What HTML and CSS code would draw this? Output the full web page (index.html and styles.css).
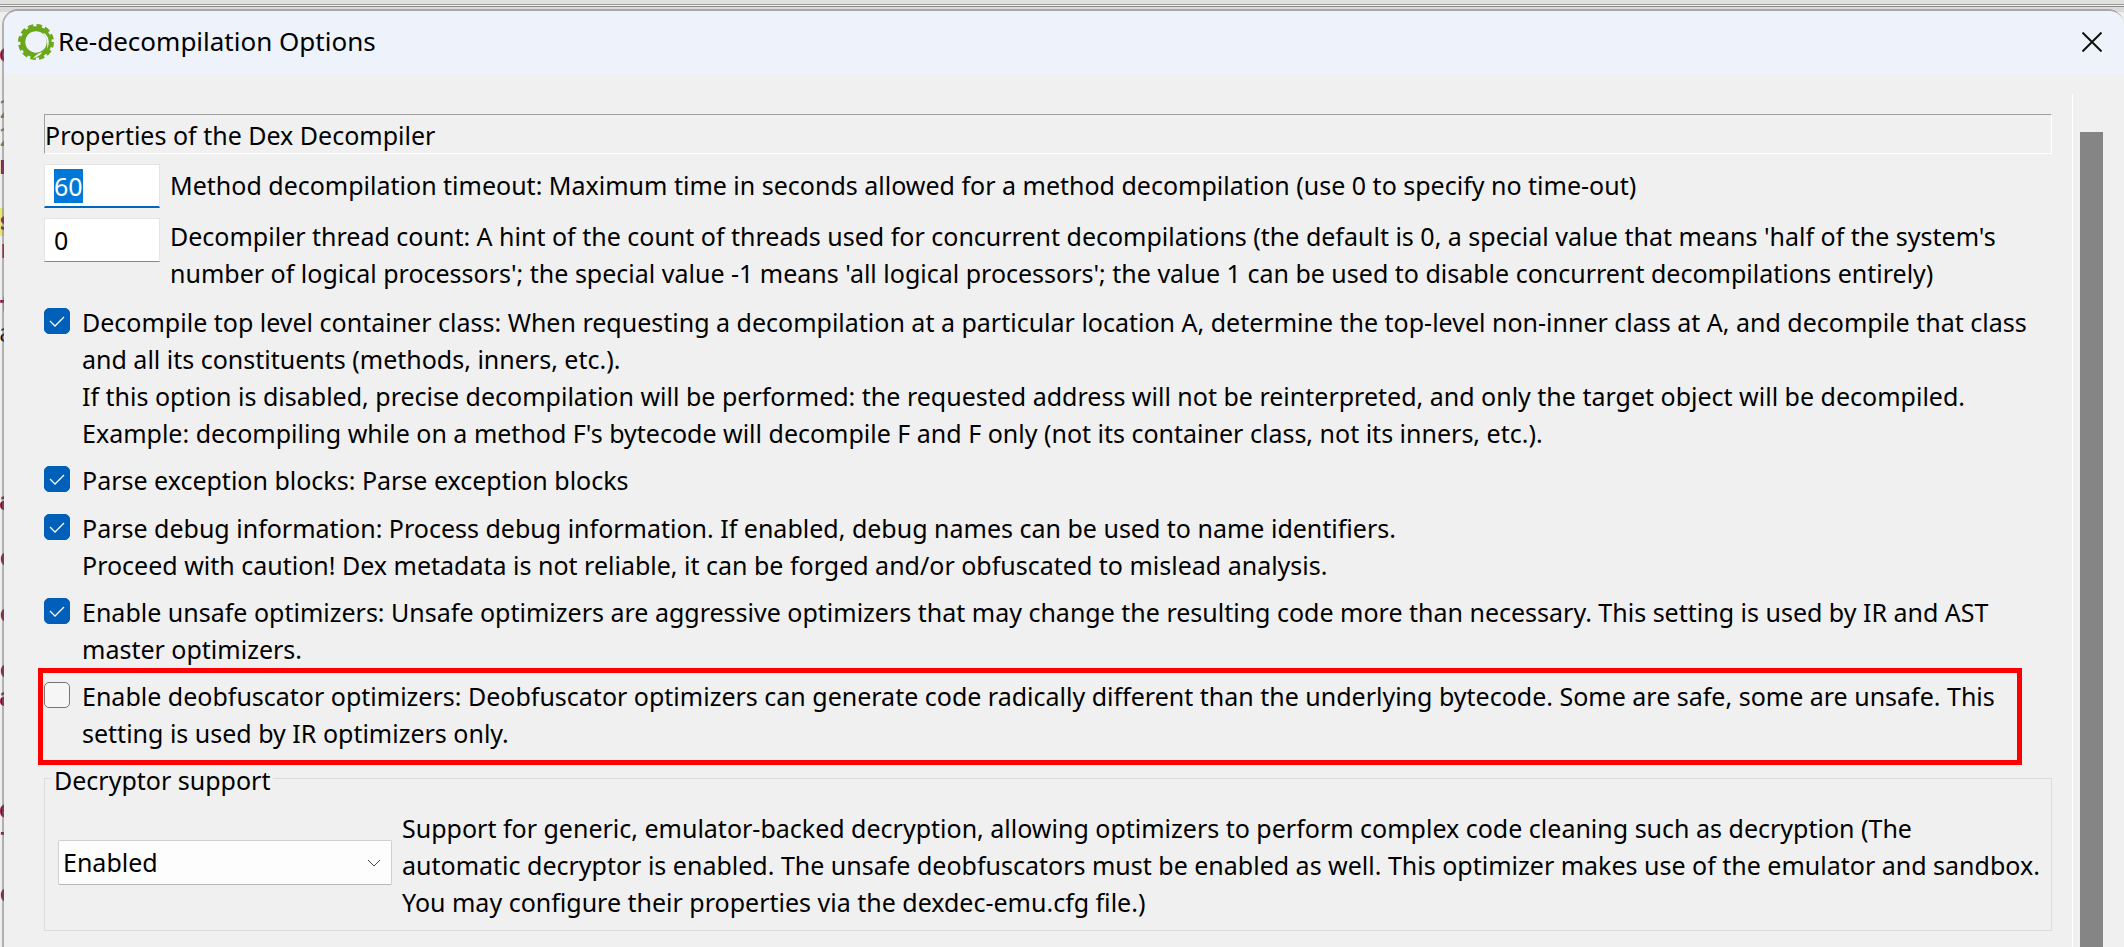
FILE: index.html
```html
<!DOCTYPE html>
<html lang="en">

<head>
  <meta charset="UTF-8">
  <meta name="viewport" content="width=device-width, initial-scale=1.0">
  <title>Re-decompilation Options</title>
  <link rel="stylesheet" href="styles.css">
</head>

<body>
  <!-- editor window behind the dialog, only its edge is visible -->
  <div class="editor" aria-hidden="true">
    <div class="editor-bar"></div>
    <div class="code">
      <span class="kw">o</span>
      <span></span>
      <span class="num">2</span>
      <span class="num">2</span>
      <span class="kw">n</span>
      <span></span>
      <span class="kw mark">s</span>
      <span class="kw">r</span>
      <span></span>
      <span class="kw">t</span>
      <span>a</span>
      <span></span>
      <span></span>
      <span></span>
      <span></span>
      <span></span>
      <span class="kw">a</span>
      <span></span>
      <span class="kw">c</span>
      <span></span>
      <span class="kw">c</span>
      <span></span>
      <span class="kw">c</span>
      <span class="kw">a</span>
      <span></span>
      <span></span>
      <span></span>
      <span class="kw">e</span>
      <span class="kw">f</span>
      <span></span>
      <span class="kw">c</span>
    </div>
  </div>

  <main class="dialog">
    <header class="titlebar">
      <svg class="logo" viewBox="0 0 36 36" aria-hidden="true">
        <circle cx="18" cy="18" r="13.2" fill="none" stroke="#6ba71b" stroke-width="5" />
        <circle cx="18" cy="18" r="16.4" fill="none" stroke="#6ba71b" stroke-width="3.2" stroke-dasharray="5.4 3.19" />
        <path d="M8 17C8 11 12 8 17 8C13 9 10 12 9 18ZM26 9C31 12 32 19 29 25C30 19 29 14 25 10ZM23 30C20 33 17 33 15 35C16 32 19 30 24 28Z" fill="#eef3fb" />
      </svg>
      <h1>Re-decompilation Options</h1>
      <button class="close" type="button" aria-label="Close">
        <svg viewBox="0 0 20 20"><path d="M0.5 0.5L19.5 19.5M19.5 0.5L0.5 19.5" /></svg>
      </button>
    </header>

    <div class="content">
      <form class="options">
        <h2 class="heading">Properties of the Dex Decompiler</h2>

        <div class="row field">
          <input class="text active" id="timeout" type="text" value="60">
          <label for="timeout">Method decompilation timeout: Maximum time in seconds allowed for a method decompilation (use 0 to specify no time-out)</label>
        </div>
        <div class="row field">
          <input class="text" id="threads" type="text" value="0">
          <label for="threads">Decompiler thread count: A hint of the count of threads used for concurrent decompilations (the default is 0, a special value that means 'half of the system's<br>
            number of logical processors'; the special value -1 means 'all logical processors'; the value 1 can be used to disable concurrent decompilations entirely)</label>
        </div>

        <div class="row">
          <input class="check" id="toplevel" type="checkbox" checked>
          <label for="toplevel">Decompile top level container class: When requesting a decompilation at a particular location A, determine the top-level non-inner class at A, and decompile that class<br>
            and all its constituents (methods, inners, etc.).<br>
            If this option is disabled, precise decompilation will be performed: the requested address will not be reinterpreted, and only the target object will be decompiled.<br>
            Example: decompiling while on a method F's bytecode will decompile F and F only (not its container class, not its inners, etc.).</label>
        </div>
        <div class="row">
          <input class="check" id="exceptions" type="checkbox" checked>
          <label for="exceptions">Parse exception blocks: Parse exception blocks</label>
        </div>
        <div class="row">
          <input class="check" id="debug" type="checkbox" checked>
          <label for="debug">Parse debug information: Process debug information. If enabled, debug names can be used to name identifiers.<br>
            Proceed with caution! Dex metadata is not reliable, it can be forged and/or obfuscated to mislead analysis.</label>
        </div>
        <div class="row">
          <input class="check" id="unsafe" type="checkbox" checked>
          <label for="unsafe">Enable unsafe optimizers: Unsafe optimizers are aggressive optimizers that may change the resulting code more than necessary. This setting is used by IR and AST<br>
            master optimizers.</label>
        </div>
        <div class="row highlight">
          <input class="check" id="deobf" type="checkbox">
          <label for="deobf">Enable deobfuscator optimizers: Deobfuscator optimizers can generate code radically different than the underlying bytecode. Some are safe, some are unsafe. This<br>
            setting is used by IR optimizers only.</label>
        </div>

        <fieldset class="group">
          <legend>Decryptor support</legend>
          <div class="combo">
            <select id="decryptor">
              <option>Enabled</option>
              <option>Disabled</option>
            </select>
            <svg viewBox="0 0 14 8" aria-hidden="true"><path d="M1 1L7 7L13 1" /></svg>
          </div>
          <label for="decryptor">Support for generic, emulator-backed decryption, allowing optimizers to perform complex code cleaning such as decryption (The<br>
            automatic decryptor is enabled. The unsafe deobfuscators must be enabled as well. This optimizer makes use of the emulator and sandbox.<br>
            You may configure their properties via the dexdec-emu.cfg file.)</label>
        </fieldset>
      </form>
      <div class="scrollbar"><div class="thumb"></div></div>
    </div>
  </main>
  <script>
    window.onload = function () {
      const timeout = document.getElementById('timeout');
      timeout.focus();
      timeout.select();
    };
  </script>
</body>

</html>
```
FILE: styles.css
```css
* {
  box-sizing: border-box;
}

body {
  margin: 0;
  height: 100vh;
  overflow: hidden;
  background: #efefef;
  color: #000;
  font-family: "Noto Sans", sans-serif;
  font-size: 25px;
  line-height: 37px;
}

.editor {
  position: absolute;
  inset: 0;
  overflow: hidden;
}

.editor-bar {
  height: 12px;
  background: linear-gradient(#e0e0e0 4px, #9a9a9a 4px 5px, #f0f0f0 5px 6px, #8c8c8c 6px 7px, #dadada 7px);
}

.code {
  display: flex;
  flex-direction: column;
  padding-top: 28px;
  font: 24px/28px "DejaVu Sans Mono", monospace;
}

.code span {
  flex: none;
  height: 28px;
  text-indent: -1px;
}

.code .kw {
  color: #7f0055;
  font-weight: bold;
}

.code .num {
  color: #787878;
}

.code .mark {
  background: #e8e678;
}

.dialog {
  position: absolute;
  inset: 9px 0 0 2px;
  display: flex;
  flex-direction: column;
  overflow: hidden;
  border: 2px solid rgba(115, 115, 115, 0.5);
  border-right: 0;
  border-bottom: 0;
  border-radius: 16px 16px 0 0;
  background: #f0f0f0;
  background-clip: padding-box;
}

.titlebar {
  display: flex;
  flex: none;
  align-items: center;
  gap: 4px;
  height: 63px;
  padding: 0 22px 2px 14px;
  background: #eef3fb;
}

.titlebar h1 {
  flex: 1;
  margin: 0;
  font-size: 26px;
  font-weight: normal;
}

.logo {
  width: 36px;
  height: 36px;
}

.close {
  padding: 0;
  border: 0;
  background: none;
}

.close svg {
  display: block;
  width: 20px;
  height: 20px;
  fill: none;
  stroke: #111;
  stroke-width: 2;
}

.content {
  display: flex;
  flex: 1;
  padding: 20px 21px 0 40px;
}

.options {
  display: flex;
  flex: 1;
  flex-direction: column;
  gap: 10px;
  min-width: 0;
  padding: 20px 20px 0 0;
}

.heading {
  height: 40px;
  margin: 0;
  border: 1px solid;
  border-color: #a0a0a0 #fff #fff #a0a0a0;
  font-size: 25px;
  font-weight: normal;
  line-height: 40px;
}

.row {
  display: flex;
  gap: 12px;
  align-items: flex-start;
  min-height: 38px;
  white-space: nowrap;
}

.field {
  gap: 10px;
  align-items: center;
}

.field label {
  padding-bottom: 2px;
}

.text {
  flex: none;
  align-self: flex-start;
  width: 116px;
  height: 44px;
  padding: 0 9px;
  border: 1px solid #e5e5e5;
  border-bottom: 1px solid #868686;
  outline: none;
  background: #fff;
  font: inherit;
}

.active {
  border-bottom: 2px solid #0067c0;
}

.active::selection {
  background: #0078d7;
  color: #fff;
}

.check {
  flex: none;
  appearance: none;
  width: 26px;
  height: 26px;
  margin: 4px 0 0;
  border: 1px solid #767676;
  border-radius: 5px;
  background: #f6f6f6;
}

.check:checked {
  border-color: #005fb8;
  background: #005fb8 url("data:image/svg+xml,%3Csvg xmlns='http://www.w3.org/2000/svg' viewBox='0 0 26 26'%3E%3Cpath d='M6 13L11 18L20 9' fill='none' stroke='white' stroke-width='1.3'/%3E%3C/svg%3E") center / 26px;
}

/* the frame is drawn around the row, so it takes no room of its own */
.highlight {
  margin: -10px 30px -13px -6px;
  padding: 5px 0 8px 1px;
  border: 5px solid #f00;
}

.group {
  display: flex;
  align-items: center;
  gap: 10px;
  min-width: 0;
  margin: 0;
  padding: 15px 13px 9px;
  border: 1px solid #dcdcdc;
  white-space: nowrap;
}

.group legend {
  margin-left: -7px;
  padding: 3px 3px 0;
  line-height: 30px;
}

.combo {
  position: relative;
  flex: none;
  width: 334px;
  padding-bottom: 6px;
}

.combo select {
  appearance: none;
  display: block;
  width: 100%;
  height: 45px;
  padding: 0 4px;
  border: 1px solid #d0d0d0;
  border-bottom-color: #b8b8b8;
  border-radius: 2px;
  background: #fdfdfd;
  color: #000;
  font: inherit;
}

.combo svg {
  position: absolute;
  top: 19px;
  right: 11px;
  width: 14px;
  height: 8px;
  fill: none;
  stroke: #444;
  pointer-events: none;
}

.scrollbar {
  flex: none;
  width: 31px;
  padding: 38px 0 0 7px;
  border-left: 1px solid #fff;
}

.thumb {
  width: 23px;
  height: 100%;
  background: #858585;
}
```
